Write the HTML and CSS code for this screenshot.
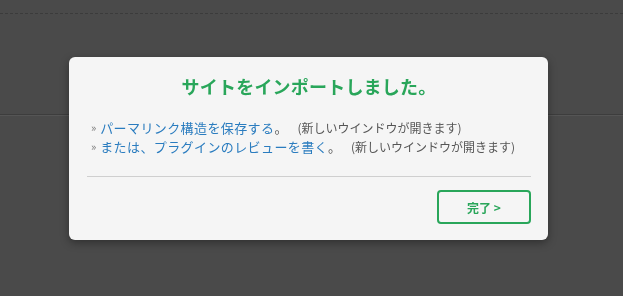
FILE: index.html
```html
<!DOCTYPE html>
<html lang="ja">
<head>
<meta charset="utf-8">
<link rel="stylesheet" href="styles.css">
</head>
<body>
<div class="page">
  <div class="topbar"></div>
  <div class="band"></div>
</div>
<div class="overlay">
  <div class="dialog">
    <h2 class="title">サイトをインポートしました。</h2>
    <ul class="links">
      <li><span class="raquo">»</span> <a href="#">パーマリンク構造を保存する</a><span class="stop">。</span><span class="note">(新しいウインドウが開きます)</span></li>
      <li><span class="raquo">»</span> <a href="#">または、プラグインのレビューを書く</a><span class="stop">。</span><span class="note">(新しいウインドウが開きます)</span></li>
    </ul>
    <hr class="divider">
    <div class="actions">
      <button class="done">完了 &gt;</button>
    </div>
  </div>
</div>
</body>
</html>
```
FILE: styles.css
```css
html, body {
  margin: 0;
  padding: 0;
  width: 623px;
  height: 296px;
  overflow: hidden;
  background: #4a4a4a;
  font-family: "Noto Sans CJK JP", "Noto Sans", sans-serif;
}
.page {
  height: 296px;
}
.topbar {
  height: 13px;
  border-bottom: 1px dashed #3b3b3b;
}
.band {
  height: 100px;
  border-bottom: 1px solid #3d3d3d;
  box-shadow: 0 1px 0 #555;
}
.overlay {
  position: fixed;
  inset: 0;
}
.dialog {
  position: absolute;
  left: 69px;
  top: 57px;
  width: 444px;
  height: 147px;
  padding: 19px 17px 17px 18px;
  background: #f5f5f5;
  border-radius: 6px;
  box-shadow: 0 3px 8px rgba(0,0,0,0.35);
}
.title {
  margin: 0;
  text-align: center;
  font-size: 18px;
  line-height: 21px;
  font-weight: 700;
  color: #29a65a;
  letter-spacing: 0.2px;
}
.links {
  list-style: none;
  margin: 21px 0 0 4px;
  padding: 0;
  font-size: 13px;
  line-height: 18px;
  color: #555;
}
.raquo {
  font-size: 11px;
  color: #777;
  vertical-align: 1px;
}
.links a {
  color: #2a7cbf;
  text-decoration: none;
  letter-spacing: 0.4px;
  margin-left: 1px;
}
.stop {
  margin-right: 10px;
}
.note {
  font-size: 12px;
  color: #555;
}
.divider {
  margin: 20px 0 0 0;
  border: 0;
  border-top: 1px solid #cfcfcf;
  height: 0;
}
.actions {
  display: flex;
  justify-content: flex-end;
  margin-top: 13px;
}
.done {
  width: 94px;
  height: 34px;
  border: 2px solid #29a65a;
  border-radius: 4px;
  background: #f5f5f5;
  color: #29a65a;
  font-family: inherit;
  font-size: 12px;
  font-weight: 700;
  cursor: pointer;
  padding: 0;
}
```
